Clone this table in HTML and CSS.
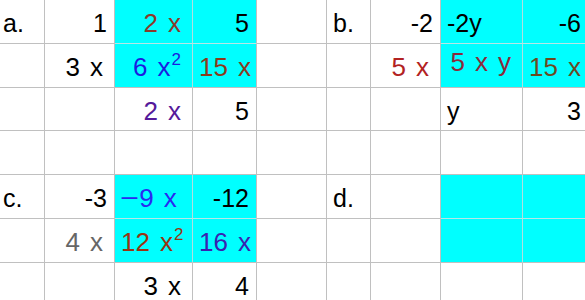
FILE: index.html
```html
<!DOCTYPE html>
<html>
<head>
<meta charset="utf-8">
<link rel="stylesheet" href="styles.css">
</head>
<body>
<div class="sheet">
  <!-- row 1 -->
  <div class="c l la">a.</div>
  <div class="c">1</div>
  <div class="c m cy brown">2<span class="x">x</span></div>
  <div class="c cy er">5</div>
  <div class="c"></div>
  <div class="c l">b.</div>
  <div class="c">-2</div>
  <div class="c l cy">-2y</div>
  <div class="c cy">-6</div>
  <!-- row 2 -->
  <div class="c"></div>
  <div class="c m">3<span class="x">x</span></div>
  <div class="c m cy eb blue">6<span class="x">x</span><sup>2</sup></div>
  <div class="c m cy eb er brown2">15<span class="x">x</span></div>
  <div class="c"></div>
  <div class="c"></div>
  <div class="c m red">5<span class="x">x</span></div>
  <div class="c m cy eb wine up">5<span class="x">x</span><span class="x">y</span></div>
  <div class="c m cy eb olive wide">15<span class="x">x</span></div>
  <!-- row 3 -->
  <div class="c"></div>
  <div class="c"></div>
  <div class="c m purple">2<span class="x">x</span></div>
  <div class="c">5</div>
  <div class="c"></div>
  <div class="c"></div>
  <div class="c"></div>
  <div class="c l">y</div>
  <div class="c">3</div>
  <!-- row 4 -->
  <div class="c"></div>
  <div class="c"></div>
  <div class="c"></div>
  <div class="c"></div>
  <div class="c"></div>
  <div class="c"></div>
  <div class="c"></div>
  <div class="c"></div>
  <div class="c"></div>
  <!-- row 5 -->
  <div class="c l la">c.</div>
  <div class="c">-3</div>
  <div class="c m cy blue2 lft"><span class="minus">&minus;</span>9<span class="x">x</span></div>
  <div class="c cy er">-12</div>
  <div class="c"></div>
  <div class="c l">d.</div>
  <div class="c"></div>
  <div class="c cy"></div>
  <div class="c cy"></div>
  <!-- row 6 -->
  <div class="c"></div>
  <div class="c m gray">4<span class="x">x</span></div>
  <div class="c m cy eb brown3">12<span class="x">x</span><sup>2</sup></div>
  <div class="c m cy eb er indigo">16<span class="x">x</span></div>
  <div class="c"></div>
  <div class="c"></div>
  <div class="c"></div>
  <div class="c cy eb"></div>
  <div class="c cy eb"></div>
  <!-- row 7 -->
  <div class="c"></div>
  <div class="c"></div>
  <div class="c m">3<span class="x">x</span></div>
  <div class="c">4</div>
  <div class="c"></div>
  <div class="c"></div>
  <div class="c"></div>
  <div class="c"></div>
  <div class="c"></div>
</div>
</body>
</html>
```
FILE: styles.css
```css
html, body {
  margin: 0;
  padding: 0;
  background: #ffffff;
  overflow: hidden;
}

.sheet {
  display: grid;
  grid-template-columns: 45px 70px 78px 64px 70px 44px 70px 82px 66px;
  grid-template-rows: 44px 44px 43px 44px 44px 44px 44px;
  width: 589px;
  font-family: "Liberation Sans", Arial, sans-serif;
  font-size: 25px;
  color: #000000;
}

.c {
  box-sizing: border-box;
  border-right: 1px solid #c0c0c0;
  border-bottom: 1px solid #c0c0c0;
  padding: 9px 7px 0 6px;
  line-height: 28px;
  text-align: right;
  white-space: nowrap;
  overflow: visible;
}

.l {
  text-align: left;
}

.la {
  padding-left: 3px;
}

.m {
  font-size: 26px;
  padding-right: 11px;
}

.m.wide {
  padding-right: 14px;
}

.x {
  margin-left: 10px;
}

.minus {
  display: inline-block;
  transform: scaleX(1.25);
  transform-origin: left center;
  margin-right: 4px;
}

sup {
  font-size: 17px;
  line-height: 0;
  vertical-align: 11px;
  margin-left: 1px;
}

.cy {
  background: #00ffff;
  border-right-color: #b2dede;
  border-bottom-color: #b8e6e6;
}

.cy.eb {
  border-bottom-color: #c0c0c0;
}

.cy.er {
  border-right-color: #c0c0c0;
}

.up {
  padding-top: 4px;
}

.lft {
  text-align: left;
  padding-left: 5px;
}

.brown { color: #8b3a2b; }
.brown2 { color: #8b3a1c; }
.brown3 { color: #993311; }
.blue { color: #1c1ce0; }
.blue2 { color: #2a2af0; }
.purple { color: #551a9a; }
.red { color: #b22222; }
.wine { color: #8b2a3a; }
.olive { color: #6b4a1f; }
.gray { color: #666666; }
.indigo { color: #3a22b0; }
```
